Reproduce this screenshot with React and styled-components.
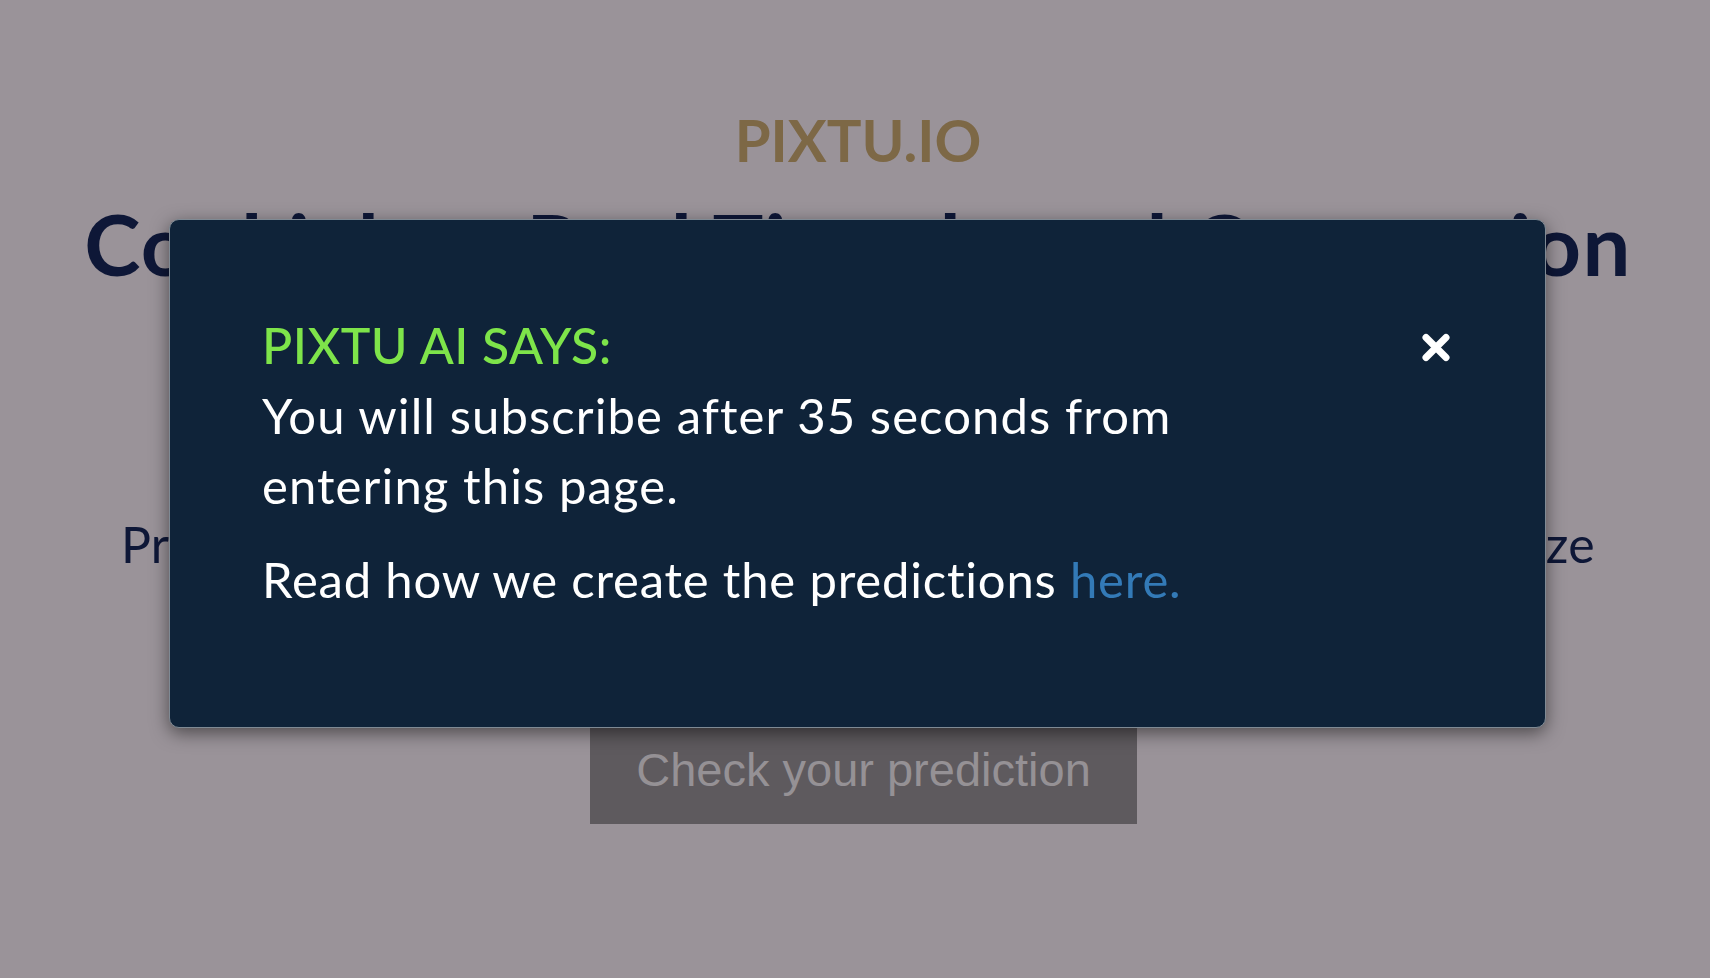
import React from "react";
import styled, { createGlobalStyle } from "styled-components";

const GlobalStyle = createGlobalStyle`
  html, body {
    margin: 0;
    padding: 0;
    background: #9a9399;
    overflow: hidden;
  }
  body {
    font-family: "Lato", "Noto Sans", sans-serif;
  }
`;

const Page = styled.main`
  min-height: 978px;
  box-sizing: border-box;
  padding-left: 6px;
  display: flex;
  flex-direction: column;
  align-items: center;
  text-align: center;
`;

const Logo = styled.div`
  margin-top: 105px;
  font-family: "Lato", sans-serif;
  font-weight: 700;
  font-size: 58px;
  line-height: 1.2;
  color: #7d6846;
  letter-spacing: 0;
`;

const Headline = styled.h1`
  margin: 17px 0 0;
  font-family: "Lato", sans-serif;
  font-weight: 700;
  font-size: 85px;
  line-height: 1.2;
  color: #0e1737;
  letter-spacing: 1.35px;
  white-space: nowrap;
`;

const Lead = styled.p`
  margin: 220px 0 0;
  font-family: "Lato", sans-serif;
  font-weight: 400;
  font-size: 50px;
  line-height: 1.2;
  color: #0e1737;
  letter-spacing: 0.35px;
  white-space: nowrap;
`;

const CtaButton = styled.button`
  margin-top: 145px;
  margin-left: 11px;
  border: none;
  border-radius: 0;
  padding: 24px 46px 27px;
  background: #5e5a5e;
  color: #959195;
  font-family: "Liberation Sans", Arial, sans-serif;
  font-size: 47px;
  line-height: 1.15;
  cursor: pointer;
`;

const Overlay = styled.div`
  position: fixed;
  inset: 0;
  padding: 219px 0 0 5px;
  display: flex;
  justify-content: center;
  align-items: flex-start;
`;

const Modal = styled.div`
  width: 1377px;
  box-sizing: border-box;
  background: #0f2339;
  border: 1px solid #7f8a94;
  border-radius: 10px;
  box-shadow: 0 5px 18px rgba(0, 0, 0, 0.5);
  padding: 98px 95px 113px 92px;
  display: flex;
  align-items: flex-start;
`;

const TextColumn = styled.div`
  width: 1000px;
  text-align: left;
`;

const ModalTitle = styled.h4`
  margin: 0 0 7px;
  font-family: "Lato", sans-serif;
  font-weight: 500;
  font-size: 50px;
  line-height: 55px;
  letter-spacing: 0.5px;
  color: #7ee44a;
`;

const ModalText = styled.p`
  margin: 0 0 ${(p) => p.$gap || 0}px;
  font-family: "Lato", sans-serif;
  font-weight: 400;
  font-size: 49px;
  line-height: 70px;
  letter-spacing: ${(p) => p.$spacing ?? 1.1}px;
  color: #ffffff;
`;

const Link = styled.a`
  color: #337ab7;
  text-decoration: none;
`;

const CloseButton = styled.button`
  margin: 15px 0 0 auto;
  padding: 0;
  width: 28px;
  height: 29px;
  border: none;
  background: transparent;
  cursor: pointer;
  display: flex;
`;

function CloseIcon() {
  return (
    <svg width="28" height="29" viewBox="0 0 28 29" fill="none">
      <path
        d="M4 4.5 L24 24.5 M24 4.5 L4 24.5"
        stroke="#ffffff"
        strokeWidth="7"
        strokeLinecap="round"
      />
    </svg>
  );
}

export default function App() {
  return (
    <>
      <GlobalStyle />
      <Page>
        <Logo>PIXTU.IO</Logo>
        <Headline>Cookieless Real Time-based Conversion</Headline>
        <Lead>Predict which of your visitors will convert in real time and optimize</Lead>
        <CtaButton>Check your prediction</CtaButton>
      </Page>
      <Overlay>
        <Modal role="dialog">
          <TextColumn>
            <ModalTitle>PIXTU AI SAYS:</ModalTitle>
            <ModalText $gap={24}>
              You will subscribe after 35 seconds from entering this page.
            </ModalText>
            <ModalText $spacing={0.8}>
              Read how we create the predictions <Link href="#">here.</Link>
            </ModalText>
          </TextColumn>
          <CloseButton aria-label="Close">
            <CloseIcon />
          </CloseButton>
        </Modal>
      </Overlay>
    </>
  );
}
